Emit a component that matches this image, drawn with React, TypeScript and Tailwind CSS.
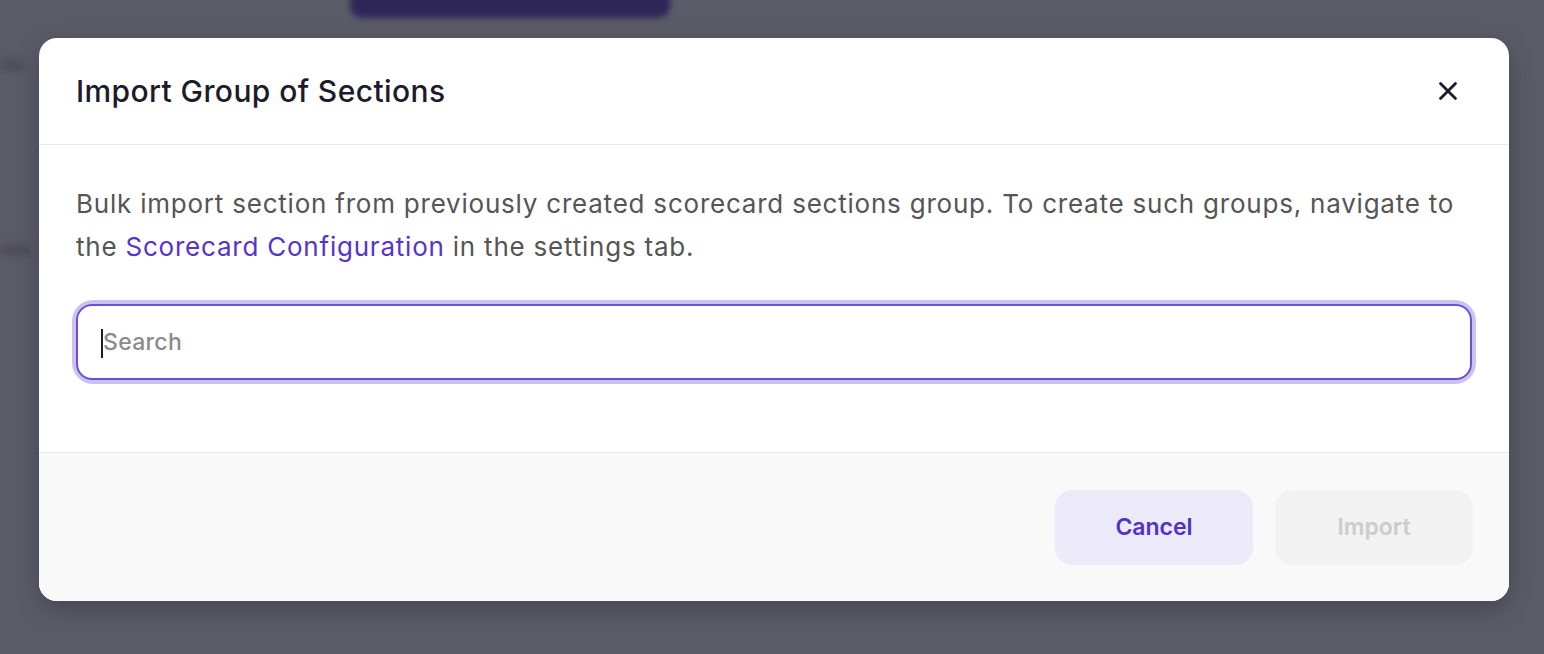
import { X } from 'lucide-react';

export default function App() {
  return (
    <div
      className="relative h-[654px] w-full overflow-hidden bg-[#5c5b68]"
      style={{ fontFamily: 'Inter, "Open Sans", sans-serif' }}
    >
      {/* Blurred page behind the overlay */}
      <div className="absolute left-[350px] top-[-30px] h-[48px] w-[320px] rounded-xl bg-[#2e2657] blur-[3px]" />
      <div className="absolute left-0 top-[60px] h-[10px] w-[24px] rounded bg-[#4c4b57] blur-[4px]" />
      <div className="absolute left-0 top-[245px] h-[10px] w-[30px] rounded bg-[#4c4b57] blur-[4px]" />

      <div className="relative pl-[39px] pt-[38px]">
        <div className="flex w-[1470px] flex-col overflow-hidden rounded-[18px] bg-white shadow-[0_8px_24px_rgba(30,30,45,0.35)]">
          {/* Header */}
          <div className="flex h-[107px] items-center justify-between border-b border-[#e8e8e8] pl-[37px] pr-[46px]">
            <h1 className="text-[30px] font-medium tracking-[0.4px] text-[#1c1b2b]">Import Group of Sections</h1>
            <button className="text-[#1c1b2b]">
              <X className="h-[30px] w-[30px]" strokeWidth={2.2} />
            </button>
          </div>

          {/* Body */}
          <div className="px-[37px] pt-[37px] pb-[72px]">
            <p className="text-[26px] leading-[43px] tracking-[0.78px] text-[#555555]">
              Bulk import section from previously created scorecard sections group. To create such groups, navigate to the{' '}
              <span className="text-[#5534cc]">Scorecard Configuration</span> in the settings tab.
            </p>
            <div className="relative mt-[36px] rounded-[17px] ring-[4px] ring-[#cbc2f1]">
              <input
                placeholder="Search"
                className="h-[76px] w-full rounded-[16px] border-2 border-[#6a4fd8] bg-white px-[25px] text-[23px] font-medium tracking-[0.3px] text-[#1c1b2b] outline-none placeholder:text-[#8a8a8a]"
              />
              <span className="absolute left-[25px] top-[25px] h-[29px] w-[2px] bg-[#1c1b2b]" />
            </div>
          </div>

          {/* Footer */}
          <div className="flex h-[149px] items-center justify-end gap-[22px] border-t border-[#e8e8e8] bg-[#f9f9f9] pr-[36px]">
            <button className="h-[75px] w-[198px] rounded-[18px] bg-[#ece9f8] text-[23px] font-semibold text-[#5031c9]">
              Cancel
            </button>
            <button className="h-[75px] w-[198px] rounded-[18px] bg-[#f2f2f2] text-[23px] font-semibold text-[#cccccc]">
              Import
            </button>
          </div>
        </div>
      </div>
    </div>
  );
}
